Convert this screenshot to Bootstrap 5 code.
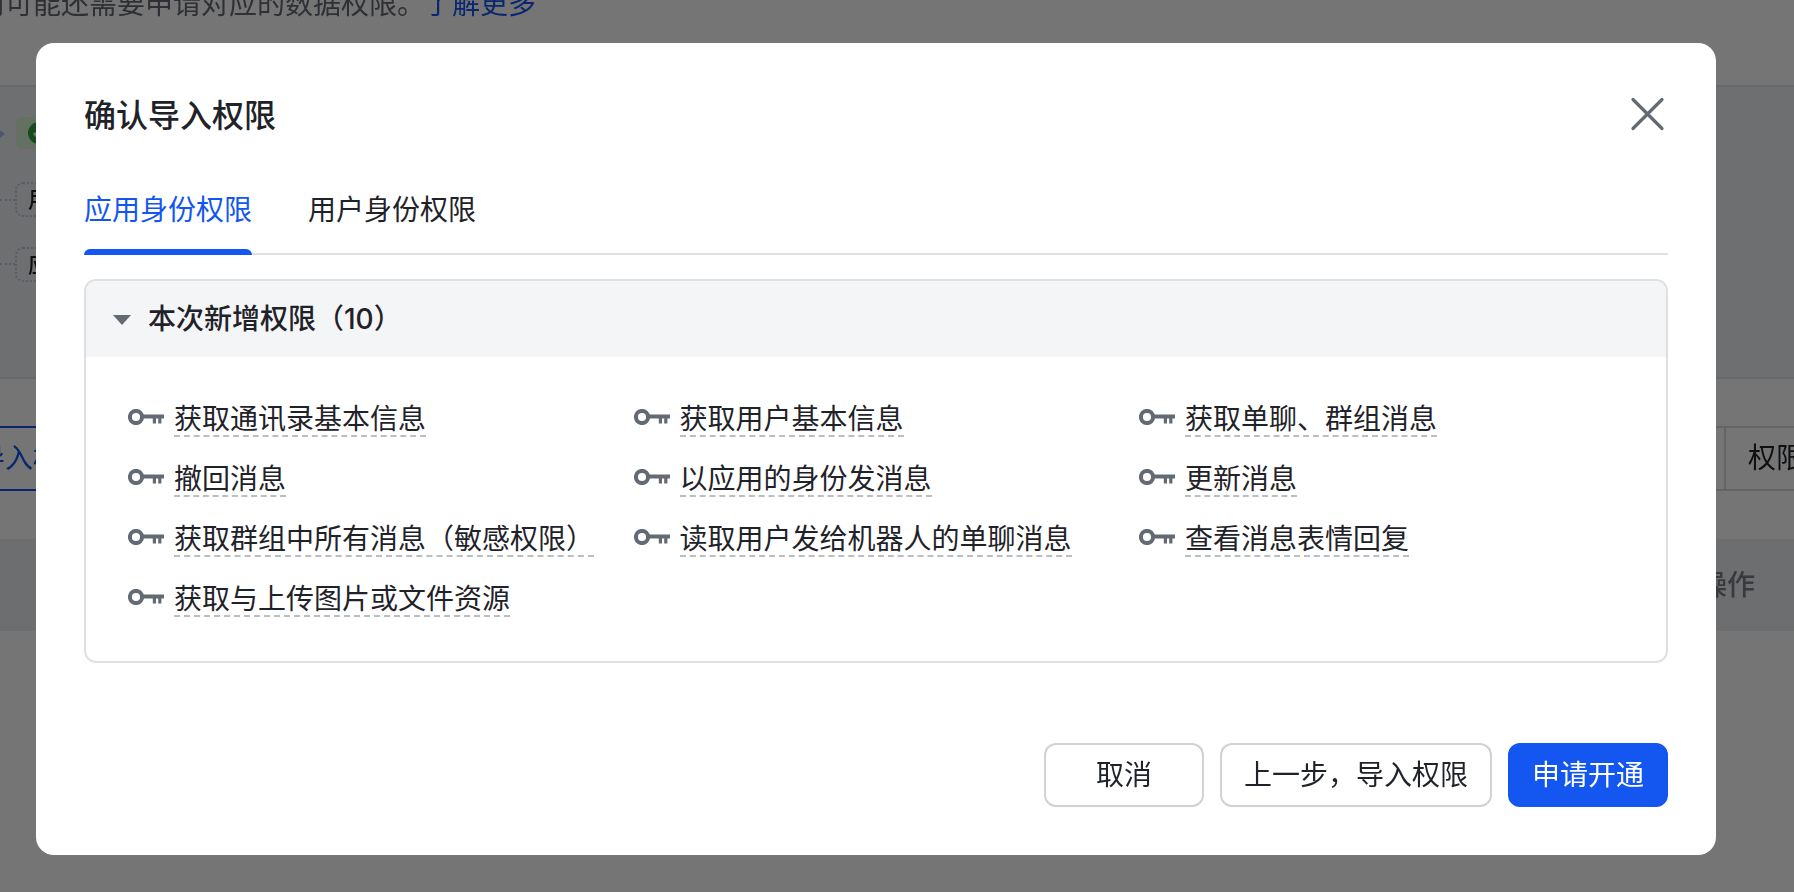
<!DOCTYPE html>
<html lang="zh-CN">
<head>
<meta charset="utf-8">
<title>确认导入权限</title>
<link href="https://cdn.jsdelivr.net/npm/bootstrap@5.3.0/dist/css/bootstrap.min.css" rel="stylesheet">
<style>
html,body{height:100%;overflow:hidden}
body{font-family:Inter,"Noto Sans CJK SC",sans-serif;font-size:28px;color:#1f2329;background:#fff}
.pg-layer{height:892px;overflow:hidden;filter:blur(.6px)}
.pg-note{height:85px;margin:-16px 0 0 -23px;line-height:40px;color:#646a73;white-space:nowrap}
.pg-note a{color:#1456f0;text-decoration:none;margin-left:-1px}
.pg-note-wrap{height:85px;overflow:hidden}
.pg-canvas{height:294px;background:#eff2f7;border-top:2px solid #e4e6ea;border-bottom:2px solid #e4e6ea;position:relative}
.pg-tri{position:absolute;left:-6px;top:38px;width:0;height:0;border:9px solid transparent;border-left:11px solid #a9bdf0}
.pg-ok{position:absolute;left:16px;top:30px;width:60px;height:32px;border-radius:6px;background:#d9f5d6}
.pg-ok svg{position:absolute;left:12px;top:5px}
.pg-node{position:absolute;left:15px;width:120px;height:35px;border:2px dotted #c4c9e6;border-radius:8px;line-height:31px;padding-left:11px;font-size:22px;font-weight:500}
.pg-link{position:absolute;left:0;width:15px;border-top:2px dotted #c4c9e6}
.pg-tabs{margin-top:47px;height:65px;border-top:2px solid #d7d9dd;border-bottom:2px solid #d7d9dd}
.pg-tab-on{margin:-2px 0;width:200px;height:65px;line-height:61px;border-top:2px solid #1456f0;border-bottom:2px solid #1456f0;color:#1456f0;white-space:nowrap;overflow:hidden}
.pg-tab-on span{margin-left:-23px}
.pg-tab-off{width:70px;border-left:2px solid #d7d9dd;padding-left:22px;line-height:61px;white-space:nowrap;overflow:hidden;color:#1f2329}
.pg-thead{margin-top:48px;height:92px;background:#edeff3;padding-right:39px;color:#7a7e86;font-weight:500;line-height:92px}
.modal-backdrop.show{opacity:.54}
.dlg{max-width:none;width:1680px;margin:43px 0 0 36px}
.dlg .modal-content{height:812px;border:0;border-radius:18px;background:#fff}
.dlg .modal-header{border:0;padding:49px 48px 0;height:97px;align-items:flex-start;border-radius:0}
.dlg-title{font-size:32px;line-height:48px;font-weight:500;margin:0;color:#1f2329}
.dlg-close{border:0;background:none;padding:0;width:36px;height:36px;margin:-1px 3px 0 0;display:block}
.dlg .modal-body{padding:49px 48px 0;flex:0 0 auto}
.tabset{border-bottom:2px solid #dee0e3;gap:56px;flex-wrap:nowrap}
.tabset .nav-link{border:0;border-radius:0;background:none;padding:1px 0 23px;line-height:40px;font-size:28px;color:#1f2329;margin:0;position:relative}
.tabset .nav-link.active{color:#1456f0;background:none}
.tabset .nav-link.active::after{content:"";position:absolute;left:0;right:0;bottom:-2px;height:6px;background:#1456f0;border-radius:6px 6px 0 0}
.perm-card{margin-top:24px;border:2px solid #dee0e3;border-radius:12px;--bs-card-bg:#fff;overflow:hidden}
.perm-head{background:#f4f5f7;height:76px;padding:0 0 0 27px;gap:17px;font-weight:500;font-size:28px;line-height:76px;border:0;border-radius:0}
.caret-down{width:0;height:0;border-left:9px solid transparent;border-right:9px solid transparent;border-top:10px solid #646a73;margin-top:2px}
.perm-body{padding:44px 20px 44px 42px}
.perm-grid{display:grid;grid-template-columns:repeat(3,505.5px);row-gap:24px}
.perm-item{gap:10px;height:36px}
.perm-item svg{flex:none;margin-top:8px}
.perm-name{display:block;height:36px;line-height:36px;border-bottom:2px dashed #bbbfc4;white-space:nowrap;color:#1f2329}
.dlg .modal-footer{border:0;padding:0 48px 48px;margin-top:auto;gap:16px}
.dlg .modal-footer>*{margin:0}
.act{height:64px;font-size:28px;line-height:40px;border-radius:12px;padding:0 22px;border:2px solid #d0d3d6;background:#fff;color:#1f2329}
.act-min{width:160px}
.act-main{background:#1456f0;border-color:#1456f0;color:#fff;width:160px}
.act-main:hover{background:#1456f0;border-color:#1456f0;color:#fff}
</style>
</head>
<body>
<div class="pg-layer">
  <div class="pg-note-wrap"><div class="pg-note">用可能还需要申请对应的数据权限。<a href="#">了解更多</a></div></div>
  <div class="pg-canvas">
    <span class="pg-tri"></span>
    <span class="pg-ok"><svg width="22" height="22" viewBox="0 0 22 22"><circle cx="11" cy="11" r="11" fill="#32a645"/><path d="M6 11l4 4 7-8" fill="none" stroke="#fff" stroke-width="3"/></svg></span>
    <span class="pg-link" style="top:112px"></span>
    <span class="pg-node" style="top:95px">用户身份</span>
    <span class="pg-link" style="top:176px"></span>
    <span class="pg-node" style="top:160px">应用身份</span>
  </div>
  <div class="pg-tabs d-flex justify-content-between">
    <div class="pg-tab-on"><span>导入权限</span></div>
    <div class="pg-tab-off">权限</div>
  </div>
  <div class="pg-thead d-flex justify-content-end">操作</div>
</div>

<div class="modal-backdrop show"></div>

<div class="modal d-block" tabindex="-1">
  <div class="modal-dialog dlg">
    <div class="modal-content">
      <div class="modal-header justify-content-between">
        <h5 class="dlg-title">确认导入权限</h5>
        <button class="dlg-close" type="button" aria-label="关闭">
          <svg width="36" height="36" viewBox="0 0 36 36"><path d="M4 3.5 33 32.5M33 3.5 4 32.5" fill="none" stroke="#646a73" stroke-width="3.2" stroke-linecap="round"/></svg>
        </button>
      </div>
      <div class="modal-body">
        <ul class="nav tabset">
          <li class="nav-item"><a class="nav-link active" href="#">应用身份权限</a></li>
          <li class="nav-item"><a class="nav-link" href="#">用户身份权限</a></li>
        </ul>
        <div class="card perm-card">
          <div class="card-header perm-head d-flex align-items-center">
            <span class="caret-down"></span><span>本次新增权限（10）</span>
          </div>
          <div class="perm-body">
            <svg width="0" height="0" class="d-block" style="position:absolute"><defs><g id="k"><circle cx="8" cy="8" r="6.1" fill="none" stroke="#646a73" stroke-width="4"/><path d="M14 5.6h22v4h-2.6v4.8h-3.2V9.6h-2.2v4.8h-3.2V9.6H14z" fill="#646a73"/></g></defs></svg>
            <div class="perm-grid">
              <div class="perm-item d-flex"><svg width="36" height="16"><use href="#k"/></svg><span class="perm-name">获取通讯录基本信息</span></div>
              <div class="perm-item d-flex"><svg width="36" height="16"><use href="#k"/></svg><span class="perm-name">获取用户基本信息</span></div>
              <div class="perm-item d-flex"><svg width="36" height="16"><use href="#k"/></svg><span class="perm-name">获取单聊、群组消息</span></div>
              <div class="perm-item d-flex"><svg width="36" height="16"><use href="#k"/></svg><span class="perm-name">撤回消息</span></div>
              <div class="perm-item d-flex"><svg width="36" height="16"><use href="#k"/></svg><span class="perm-name">以应用的身份发消息</span></div>
              <div class="perm-item d-flex"><svg width="36" height="16"><use href="#k"/></svg><span class="perm-name">更新消息</span></div>
              <div class="perm-item d-flex"><svg width="36" height="16"><use href="#k"/></svg><span class="perm-name">获取群组中所有消息（敏感权限）</span></div>
              <div class="perm-item d-flex"><svg width="36" height="16"><use href="#k"/></svg><span class="perm-name">读取用户发给机器人的单聊消息</span></div>
              <div class="perm-item d-flex"><svg width="36" height="16"><use href="#k"/></svg><span class="perm-name">查看消息表情回复</span></div>
              <div class="perm-item d-flex"><svg width="36" height="16"><use href="#k"/></svg><span class="perm-name">获取与上传图片或文件资源</span></div>
            </div>
          </div>
        </div>
      </div>
      <div class="modal-footer">
        <button class="btn act act-min" type="button">取消</button>
        <button class="btn act" type="button">上一步，导入权限</button>
        <button class="btn act act-main" type="button">申请开通</button>
      </div>
    </div>
  </div>
</div>
<script src="https://cdn.jsdelivr.net/npm/bootstrap@5.3.0/dist/js/bootstrap.bundle.min.js"></script>
</body>
</html>
